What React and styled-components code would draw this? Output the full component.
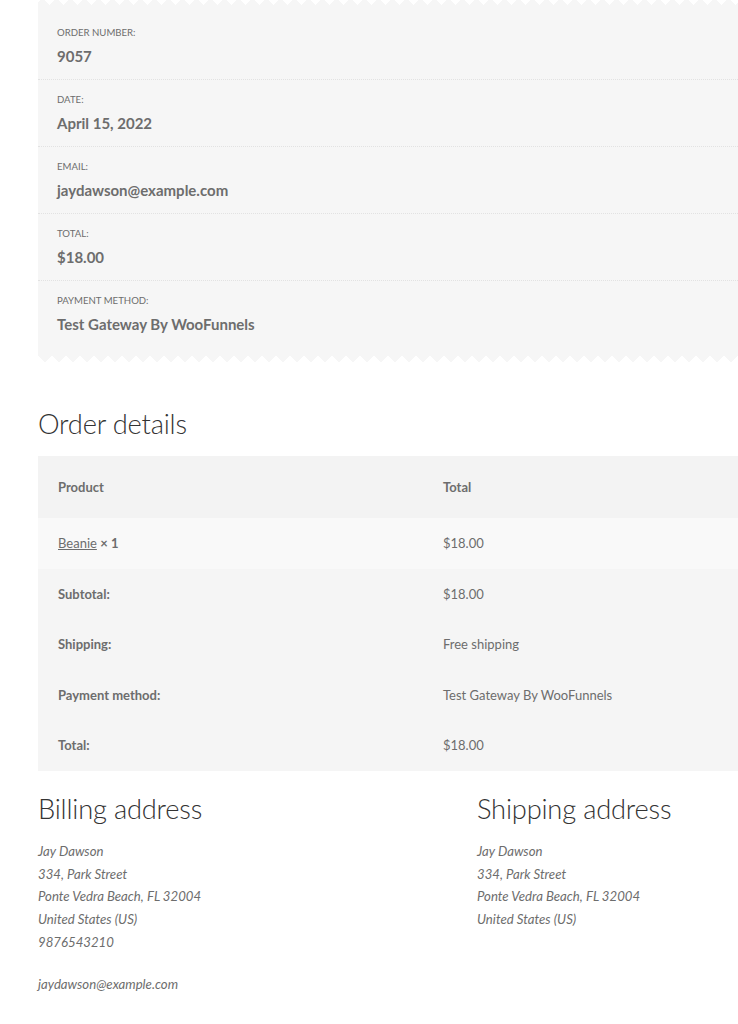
import React from "react";
import styled, { createGlobalStyle } from "styled-components";

const Global = createGlobalStyle`
  html, body { margin: 0; padding: 0; background: #ffffff; }
  body { overflow-x: hidden; font-family: Lato, "Liberation Sans", sans-serif; color: #6d6d6d; }
`;

const PANEL = "#f6f6f6";

const Page = styled.div`
  width: 746px;
  margin-left: 38px;
`;

const Overview = styled.section`
  background: ${PANEL};
`;

const TopEdge = styled.div`
  height: 5px;
  background-color: ${PANEL};
  background-image: conic-gradient(from -45deg at 50% 100%, #ffffff 90deg, transparent 0deg);
  background-size: 14px 5px;
  background-position: 4px 0;
  background-repeat: repeat-x;
`;

const BottomEdge = styled.div`
  height: 7px;
  background-color: #ffffff;
  background-image: conic-gradient(from -45deg at 50% 100%, ${PANEL} 90deg, transparent 0deg);
  background-size: 14px 7px;
  background-repeat: repeat-x;
`;

const OverviewList = styled.ul`
  list-style: none;
  margin: 0;
  padding: 8px 0 8px 0;
`;

const OverviewItem = styled.li`
  padding: 12px 19px 12px;
  border-bottom: ${(p) => (p.$last ? "none" : "1px dotted #e2e2e2")};
`;

const ItemLabel = styled.div`
  font-size: 9.6px;
  line-height: 16px;
  text-transform: uppercase;
  color: #6d6d6d;
`;

const ItemValue = styled.strong`
  display: block;
  margin-top: 4px;
  font-size: 15px;
  line-height: 22px;
  font-weight: 700;
  color: #6d6d6d;
`;

const Heading = styled.h2`
  margin: ${(p) => p.$mt}px 0 ${(p) => p.$mb}px;
  font-size: 27.3px;
  line-height: 32px;
  font-weight: 300;
  color: #333333;
  letter-spacing: -0.2px;
`;

const Table = styled.table`
  width: 100%;
  border-collapse: collapse;
  border-spacing: 0;
  font-size: 13px;
`;

const HeadCell = styled.th`
  text-align: left;
  font-weight: 700;
  background: #f3f3f3;
  color: #6d6d6d;
  padding: 21px 20px;
  line-height: 20px;
  width: ${(p) => p.$w || "auto"};
`;

const BodyRow = styled.tr`
  background: ${(p) => (p.$tone === "light" ? "#f9f9f9" : "#f5f5f5")};
`;

const RowHead = styled.th`
  text-align: left;
  font-weight: 700;
  padding: 15px 20px;
  line-height: 20.6px;
  color: #6d6d6d;
`;

const Cell = styled.td`
  padding: 15px 20px;
  line-height: 20.6px;
  color: #6d6d6d;
`;

const ProductLink = styled.a`
  color: #6d6d6d;
  text-decoration: underline;
  font-weight: 400;
`;

const Qty = styled.strong`
  font-weight: 700;
`;

const Addresses = styled.div`
  display: flex;
  justify-content: space-between;
`;

const AddressCol = styled.div`
  width: 307px;
`;

const Address = styled.address`
  font-style: italic;
  font-size: 13.2px;
  line-height: 22.7px;
  color: #6d6d6d;
  margin: 0;
`;

const AddressExtra = styled.p`
  font-style: italic;
  font-size: 13.2px;
  line-height: 22.7px;
  margin: 19.3px 0 0;
  color: #6d6d6d;
`;

const overview = [
  ["Order number:", "9057"],
  ["Date:", "April 15, 2022"],
  ["Email:", "jaydawson@example.com"],
  ["Total:", "$18.00"],
  ["Payment method:", "Test Gateway By WooFunnels"],
];

const totals = [
  ["Subtotal:", "$18.00"],
  ["Shipping:", "Free shipping"],
  ["Payment method:", "Test Gateway By WooFunnels"],
  ["Total:", "$18.00"],
];

const addressLines = ["Jay Dawson", "334, Park Street", "Ponte Vedra Beach, FL 32004", "United States (US)"];

export default function App() {
  return (
    <>
      <Global />
      <Page>
        <Overview>
          <TopEdge />
          <OverviewList>
            {overview.map(([l, v], i) => (
              <OverviewItem key={l} $last={i === overview.length - 1}>
                <ItemLabel>{l}</ItemLabel>
                <ItemValue>{v}</ItemValue>
              </OverviewItem>
            ))}
          </OverviewList>
        </Overview>
        <BottomEdge />

        <Heading $mt={46} $mb={16}>Order details</Heading>
        <Table>
          <thead>
            <tr>
              <HeadCell $w="345px">Product</HeadCell>
              <HeadCell>Total</HeadCell>
            </tr>
          </thead>
          <tbody>
            <BodyRow $tone="light">
              <Cell>
                <ProductLink href="#">Beanie</ProductLink> <Qty>× 1</Qty>
              </Cell>
              <Cell>$18.00</Cell>
            </BodyRow>
          </tbody>
          <tfoot>
            {totals.map(([l, v]) => (
              <BodyRow key={l}>
                <RowHead>{l}</RowHead>
                <Cell>{v}</Cell>
              </BodyRow>
            ))}
          </tfoot>
        </Table>

        <Addresses>
          <AddressCol>
            <Heading $mt={22} $mb={15}>Billing address</Heading>
            <Address>
              {addressLines.map((l) => (
                <div key={l}>{l}</div>
              ))}
              <div>9876543210</div>
            </Address>
            <AddressExtra>jaydawson@example.com</AddressExtra>
          </AddressCol>
          <AddressCol>
            <Heading $mt={22} $mb={15}>Shipping address</Heading>
            <Address>
              {addressLines.map((l) => (
                <div key={l}>{l}</div>
              ))}
            </Address>
          </AddressCol>
        </Addresses>
      </Page>
    </>
  );
}
